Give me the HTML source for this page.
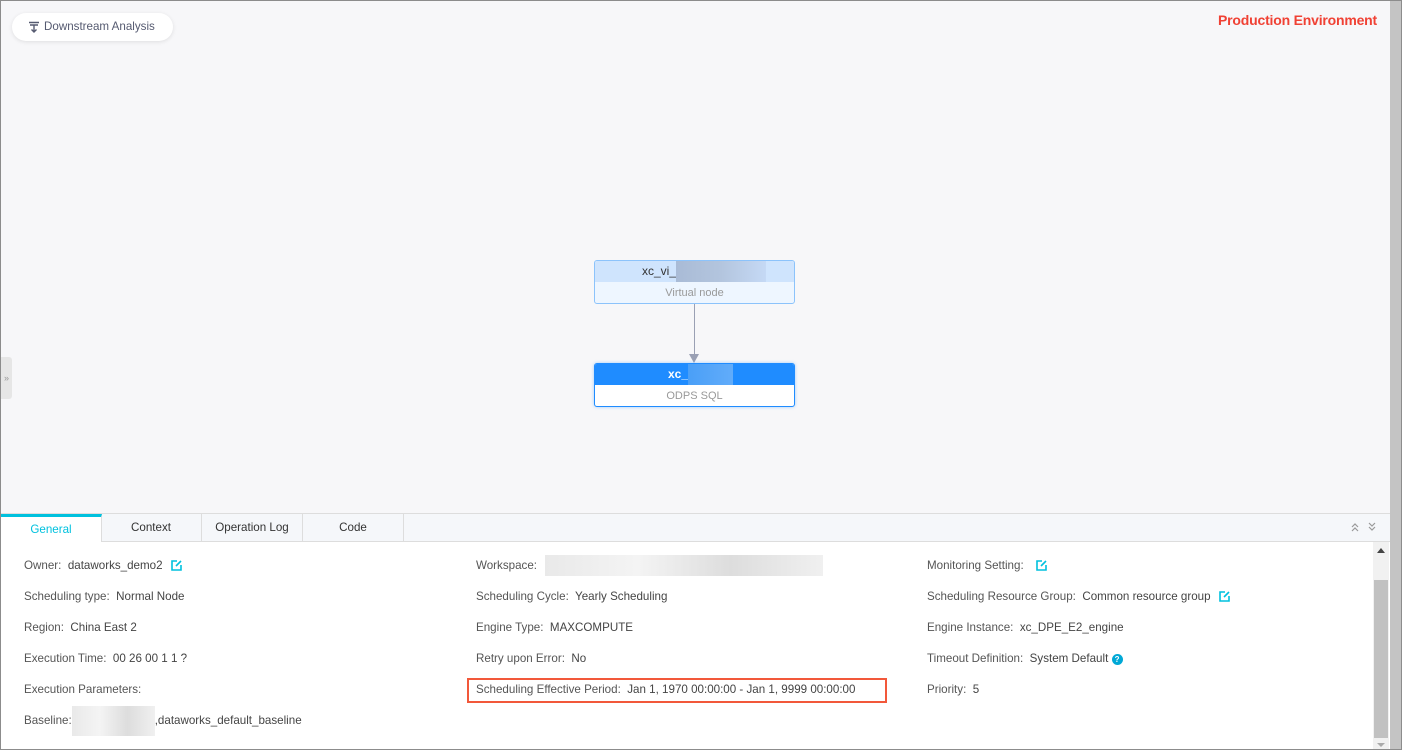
<!DOCTYPE html>
<html><head><meta charset="utf-8"><style>
*{box-sizing:border-box;margin:0;padding:0}
body{width:1402px;height:750px;overflow:hidden;font-family:"Liberation Sans",sans-serif;font-size:12px;color:#333;background:#fff;position:relative}
.frame{position:absolute;left:0;top:0;width:1402px;height:750px;border:1px solid #8c8c8c}
.canvas{position:absolute;left:1px;top:1px;width:1389px;height:512px;background:#f7f7f9}
.rscroll{position:absolute;left:1390px;top:1px;width:11px;height:748px;background:#c4c4c4}
.btn{position:absolute;left:12px;top:13px;width:161px;height:28px;border-radius:14px;background:#fff;box-shadow:0 1px 4px rgba(0,0,0,.1);color:#555a70;font-size:11.6px;line-height:28px;padding-left:32px}
.prod{position:absolute;right:25px;top:12px;color:#f04134;font-weight:bold;font-size:14px;letter-spacing:-0.2px}
.node{position:absolute;left:594px;width:201px;height:44px;border-radius:3px;overflow:hidden}
.n1{top:260px;border:1px solid #8cc3fb;background:#eef6ff}
.n1 .h{background:#cfe4fd;height:21px;line-height:21px;color:#333;padding-left:47px}
.n2{top:363px;border:1px solid #1f8cff;background:#fff;box-shadow:0 0 3px rgba(31,140,255,.4)}
.n2 .h{background:#1f8cff;height:21px;line-height:21px;color:#fff;font-weight:bold;padding-left:73px}
.node .s{text-align:center;color:#999;font-size:11px;line-height:22px}
.tabs{position:absolute;left:1px;top:513px;width:1389px;height:29px;background:#f5f7fa;border-top:1px solid #ddd;border-bottom:1px solid #ddd;font-size:11.6px}
.tab{position:absolute;top:0;height:28px;width:101px;border-right:1px solid #ddd;text-align:center;line-height:28px;color:#333}
.tab.a{background:#fff;color:#00c1de;border-top:3px solid #00c1de;line-height:25px}
.sb{position:absolute;left:1373px;top:542px;width:16px;height:207px;background:#f1f1f1}
.thumb{position:absolute;left:1374px;top:580px;width:14px;height:158px;background:#c1c1c1}
.row{position:absolute;white-space:nowrap;color:#444;font-size:11.6px;line-height:14px}
.row b{font-weight:normal;color:#555}
.ic{display:inline-block;vertical-align:-2px;margin-left:8px}
.blur{position:absolute;background:linear-gradient(90deg,#e9e9e9,#f4f4f4,#ddd,#f0f0f0)}
</style></head><body>
<div class="canvas"></div>
<div class="btn"><svg style="position:absolute;left:16px;top:8px" width="12" height="12" viewBox="0 0 12 12"><path d="M1 1.5h10M2 4h8M6 4v7M3.5 8.5L6 11 8.5 8.5" stroke="#555a70" stroke-width="1.4" fill="none"/></svg>Downstream Analysis</div>
<div class="prod">Production Environment</div>
<div style="position:absolute;left:1px;top:357px;width:11px;height:42px;background:#e6e6e6;border-radius:0 3px 3px 0;color:#999;font-size:9px;line-height:42px;text-align:center">»</div>
<div class="node n1"><div class="h">xc_vi_<span style="display:inline-block;width:90px;height:21px;vertical-align:top;background:linear-gradient(90deg,#a9bbd6,#b3c5de,#c5d9f5)"></span></div><div class="s">Virtual node</div></div>
<div style="position:absolute;left:694px;top:304px;width:1px;height:52px;background:#9aa0b4"></div>
<div style="position:absolute;left:689px;top:354px;border-left:5px solid transparent;border-right:5px solid transparent;border-top:9px solid #9aa0b4"></div>
<div class="node n2"><div class="h">xc_<span style="display:inline-block;width:45px;height:21px;vertical-align:top;background:linear-gradient(90deg,#4a9ff7,#61acfa)"></span></div><div class="s">ODPS SQL</div></div>
<div class="tabs">
<div class="tab a" style="left:0">General</div>
<div class="tab" style="left:100px">Context</div>
<div class="tab" style="left:201px">Operation Log</div>
<div class="tab" style="left:302px">Code</div>
<svg style="position:absolute;left:1349px;top:8px" width="30" height="10" viewBox="0 0 30 10"><path d="M2 5L5 2 8 5M2 9L5 6 8 9M19 1L22 4 25 1M19 5L22 8 25 5" stroke="#999" stroke-width="1.2" fill="none"/></svg>
</div>
<div class="sb"></div><div class="thumb"></div>
<div style="position:absolute;left:1377px;top:548px;border-left:4px solid transparent;border-right:4px solid transparent;border-bottom:5px solid #444"></div>
<div style="position:absolute;left:1377px;top:743px;border-left:4px solid transparent;border-right:4px solid transparent;border-top:4px solid #aaa"></div>

<div class="blur" style="left:545px;top:555px;width:278px;height:21px"></div>
<div class="blur" style="left:72px;top:706px;width:83px;height:30px"></div>

<div class="row" style="left:24px;top:559px"><b>Owner:</b>&nbsp; dataworks_demo2<svg class="ic" width="11" height="11" viewBox="0 0 11 11"><path d="M6 1H1v9h9V5" stroke="#00c1de" stroke-width="1.6" fill="none"/><path d="M5 6L10 1" stroke="#00c1de" stroke-width="1.6"/></svg></div>
<div class="row" style="left:24px;top:590px"><b>Scheduling type:</b>&nbsp; Normal Node</div>
<div class="row" style="left:24px;top:621px"><b>Region:</b>&nbsp; China East 2</div>
<div class="row" style="left:24px;top:652px"><b>Execution Time:</b>&nbsp; 00 26 00 1 1 ?</div>
<div class="row" style="left:24px;top:683px"><b>Execution Parameters:</b></div>
<div class="row" style="left:24px;top:714px"><b>Baseline:</b><span style="display:inline-block;width:83px"></span>,dataworks_default_baseline</div>

<div class="row" style="left:476px;top:559px"><b>Workspace:</b></div>
<div class="row" style="left:476px;top:590px"><b>Scheduling Cycle:</b>&nbsp; Yearly Scheduling</div>
<div class="row" style="left:476px;top:621px"><b>Engine Type:</b>&nbsp; MAXCOMPUTE</div>
<div class="row" style="left:476px;top:652px"><b>Retry upon Error:</b>&nbsp; No</div>
<div style="position:absolute;left:467px;top:678px;width:420px;height:25px;border:2px solid #f2583a"></div>
<div class="row" style="left:476px;top:683px"><b>Scheduling Effective Period:</b>&nbsp; Jan 1, 1970 00:00:00 - Jan 1, 9999 00:00:00</div>

<div class="row" style="left:927px;top:559px"><b>Monitoring Setting:</b><svg class="ic" style="margin-left:12px" width="11" height="11" viewBox="0 0 11 11"><path d="M6 1H1v9h9V5" stroke="#00c1de" stroke-width="1.6" fill="none"/><path d="M5 6L10 1" stroke="#00c1de" stroke-width="1.6"/></svg></div>
<div class="row" style="left:927px;top:590px"><b>Scheduling Resource Group:</b>&nbsp; Common resource group<svg class="ic" width="11" height="11" viewBox="0 0 11 11"><path d="M6 1H1v9h9V5" stroke="#00c1de" stroke-width="1.6" fill="none"/><path d="M5 6L10 1" stroke="#00c1de" stroke-width="1.6"/></svg></div>
<div class="row" style="left:927px;top:621px"><b>Engine Instance:</b>&nbsp; xc_DPE_E2_engine</div>
<div class="row" style="left:927px;top:652px"><b>Timeout Definition:</b>&nbsp; System Default <span style="display:inline-block;width:11px;height:11px;border-radius:50%;background:#00a8d6;color:#fff;font-size:8px;line-height:11px;text-align:center;font-weight:bold;vertical-align:0">?</span></div>
<div class="row" style="left:927px;top:683px"><b>Priority:</b>&nbsp; 5</div>
<div class="rscroll"></div>
<div class="frame"></div>
</body></html>
